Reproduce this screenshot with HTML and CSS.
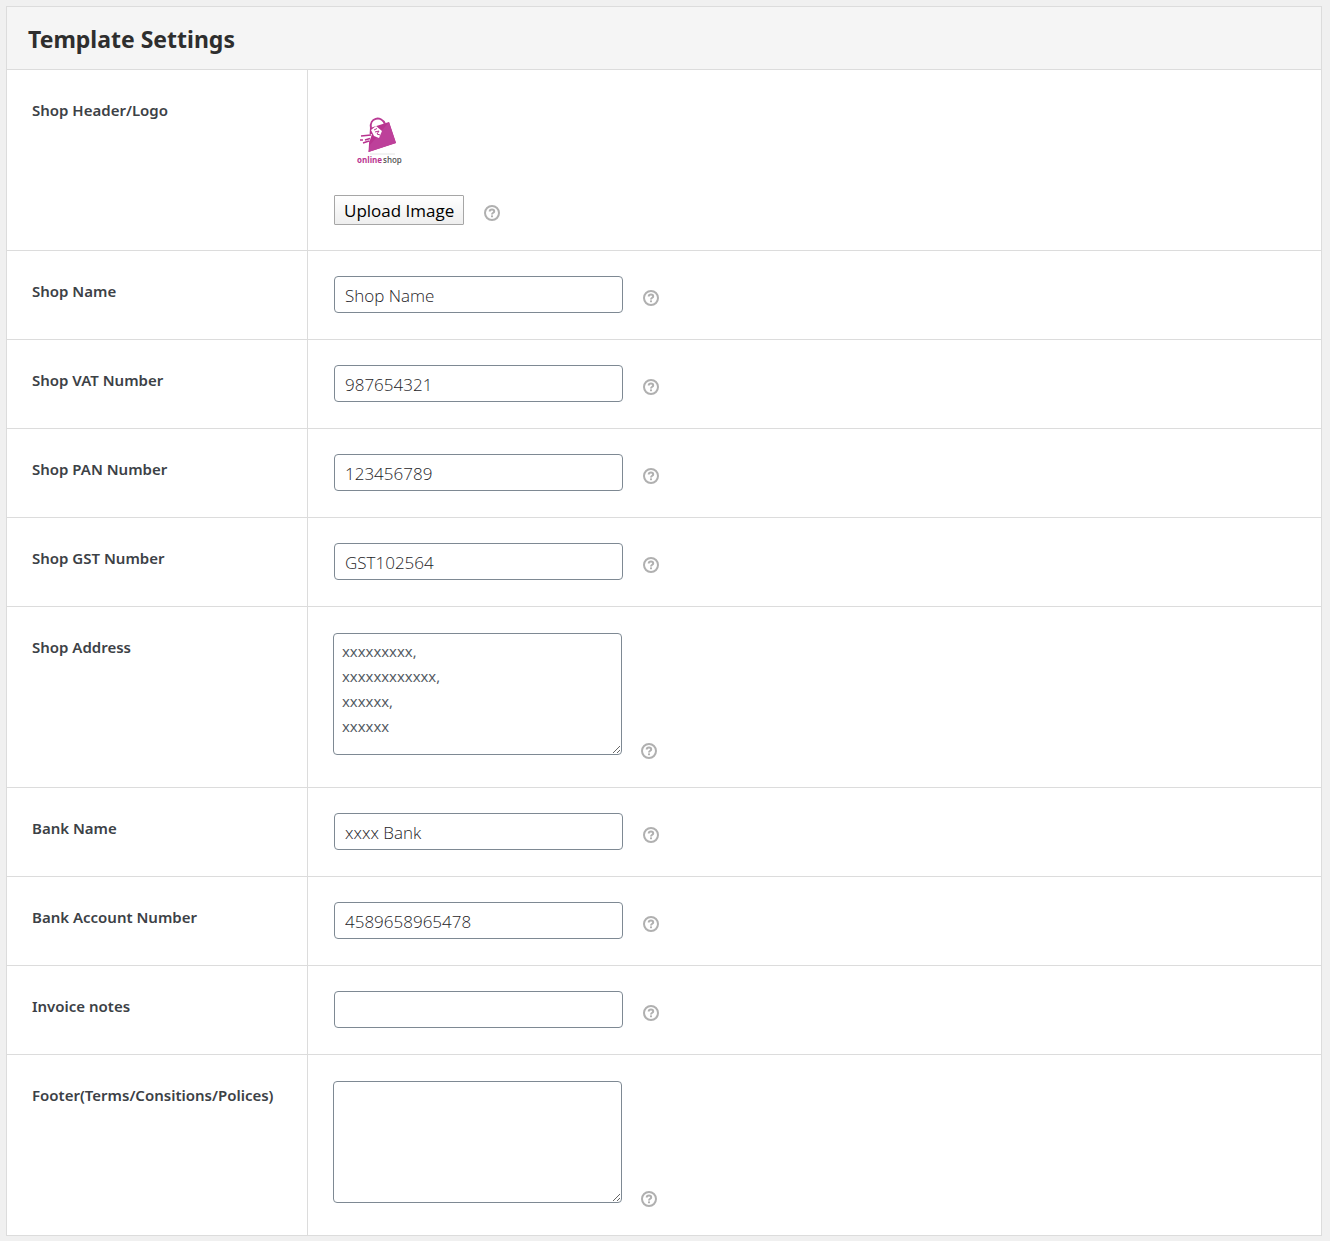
FILE: index.html
```html
<!doctype html>
<html lang="en">
  <head>
    <meta charset="UTF-8" />
    <meta name="viewport" content="width=device-width, initial-scale=1" />
    <title>Template Settings</title>
    <link rel="stylesheet" href="styles.css">
  </head>

  <body>
    <!-- Help icon, shared by all rows -->
    <svg class="sprite" aria-hidden="true">
      <symbol id="help-icon" viewBox="0 0 16 16">
        <circle cx="8" cy="8" r="7" fill="none" stroke="#b0b0b0" stroke-width="2" />
        <path d="M5.7 6.6C5.7 5.1 6.7 4.6 8 4.6s2.2.7 2.2 1.8C10.2 7.8 8 7.7 8 9.4" fill="none" stroke="#b0b0b0" stroke-width="2" />
        <rect x="7" y="10.4" width="2" height="1.8" fill="#b0b0b0" />
      </symbol>
    </svg>

    <form class="settings">
      <h2 class="title">Template Settings</h2>

      <!-- Logo -->
      <div class="row">
        <label class="name" for="upload">Shop Header/Logo</label>
        <div class="field logo-field">
          <svg class="logo" viewBox="0 0 90 90" role="img" aria-label="onlineshop">
            <path d="M37 38L56 32L63 53L35.500 62Z" fill="#b93490" />
            <path d="M56 32L63 53L35.500 62L37 55Z" fill="#bd409a" />
            <path d="M38 38C36 28 48 25 52 34" fill="none" stroke="#b93a94" stroke-width="2" />
            <path d="M38 40L43 36L49 41L46 48L41 46Z" fill="#fff" />
            <path d="M41 40L44 38.500M42 42L46 41L44 44L47 45" fill="none" stroke="#b93490" stroke-width="1" />
            <path d="M31 45L39 44L37 50L34 53L31 51Z" fill="#fff" />
            <path d="M28 46L38 45M27 50H30M32 50L37 48.500M30 53L36 51" stroke="#b93490" stroke-width="1.5" />
            <path d="M37 64H62" stroke="#e4e4e4" stroke-width="1" />
            <text x="24" y="73" class="logo-online">online</text>
            <text x="50" y="73" class="logo-shop">shop</text>
          </svg>
          <div class="control">
            <button type="button" id="upload">Upload Image</button>
            <svg class="help"><use href="#help-icon" /></svg>
          </div>
        </div>
      </div>

      <!-- Shop details -->
      <div class="row">
        <label class="name" for="shop_name">Shop Name</label>
        <div class="field control">
          <input type="text" id="shop_name" name="shop_name" value="Shop Name" />
          <svg class="help"><use href="#help-icon" /></svg>
        </div>
      </div>
      <div class="row">
        <label class="name" for="shop_vat">Shop VAT Number</label>
        <div class="field control">
          <input type="text" id="shop_vat" name="shop_vat" value="987654321" />
          <svg class="help"><use href="#help-icon" /></svg>
        </div>
      </div>
      <div class="row">
        <label class="name" for="shop_pan">Shop PAN Number</label>
        <div class="field control">
          <input type="text" id="shop_pan" name="shop_pan" value="123456789" />
          <svg class="help"><use href="#help-icon" /></svg>
        </div>
      </div>
      <div class="row">
        <label class="name" for="shop_gst">Shop GST Number</label>
        <div class="field control">
          <input type="text" id="shop_gst" name="shop_gst" value="GST102564" />
          <svg class="help"><use href="#help-icon" /></svg>
        </div>
      </div>
      <div class="row">
        <label class="name" for="shop_address">Shop Address</label>
        <div class="field control control-area">
          <textarea id="shop_address" name="shop_address">xxxxxxxxx,
xxxxxxxxxxxx,
xxxxxx,
xxxxxx</textarea>
          <svg class="help"><use href="#help-icon" /></svg>
        </div>
      </div>

      <!-- Bank details -->
      <div class="row">
        <label class="name" for="bank_name">Bank Name</label>
        <div class="field control">
          <input type="text" id="bank_name" name="bank_name" value="xxxx Bank" />
          <svg class="help"><use href="#help-icon" /></svg>
        </div>
      </div>
      <div class="row">
        <label class="name" for="bank_account">Bank Account Number</label>
        <div class="field control">
          <input type="text" id="bank_account" name="bank_account" value="4589658965478" />
          <svg class="help"><use href="#help-icon" /></svg>
        </div>
      </div>

      <!-- Notes and footer -->
      <div class="row">
        <label class="name" for="invoice_notes">Invoice notes</label>
        <div class="field control">
          <input type="text" id="invoice_notes" name="invoice_notes" />
          <svg class="help"><use href="#help-icon" /></svg>
        </div>
      </div>
      <div class="row">
        <label class="name" for="footer">Footer(Terms/Consitions/Polices)</label>
        <div class="field control control-area">
          <textarea id="footer" name="footer"></textarea>
          <svg class="help"><use href="#help-icon" /></svg>
        </div>
      </div>
    </form>
  </body>
</html>
```
FILE: styles.css
```css
* {
  box-sizing: border-box;
}

body {
  margin: 0;
  padding: 6px 8px 5px 6px;
  background-color: #f0f0f0;
  color: #3c4146;
  font-family: "Segoe UI", "Noto Sans", sans-serif;
}

.sprite {
  display: none;
}

.settings {
  border: 1px solid #dcdcdc;
  background-color: #fff;
}

.title {
  margin: 0;
  padding: 15px 21px 13px;
  background-color: #f5f5f5;
  color: #2e2e2e;
  font-size: 23px;
  font-weight: 700;
  line-height: 34px;
}

.row {
  display: grid;
  grid-template-columns: 301px 1fr;
  border-top: 1px solid #dcdcdc;
}

.name {
  padding: 30px 25px;
  border-right: 1px solid #dcdcdc;
  font-size: 15px;
  font-weight: 600;
  line-height: 20px;
}

.field {
  padding: 24px 25px;
}

.control {
  display: flex;
  align-items: center;
  gap: 19px;
}

.logo-field {
  padding-top: 20px;
}

.logo {
  display: block;
  width: 90px;
  height: 90px;
  margin-bottom: 14px;
}

.logo text {
  font-family: "Open Sans", sans-serif;
  font-size: 8px;
}

.logo-online {
  fill: #b93490;
  font-weight: 700;
}

.logo-shop {
  fill: #555;
  font-weight: 600;
}

input {
  width: 289px;
  height: 37px;
  margin: 1px 1px 2px;
  padding: 2px 10px 0;
  border: 1px solid #7e8993;
  border-radius: 4px;
  background-color: #fff;
  color: #1e2327;
  font: 300 17px "Segoe UI", "Open Sans", sans-serif;
}

textarea {
  width: 289px;
  height: 122px;
  margin: 2px 0 8px;
  padding: 5px 8px;
  border: 1px solid #7e8993;
  border-radius: 4px;
  background-color: #fff;
  color: #50575e;
  font: 15px/25px "Segoe UI", "Open Sans", sans-serif;
  resize: vertical;
}

button {
  height: 30px;
  margin: 1px;
  padding: 0 9px;
  border: 1px solid #a6a6a6;
  border-radius: 1px;
  background: linear-gradient(#fff, #eee);
  color: #000;
  font: 17px "Segoe UI", "Open Sans", sans-serif;
  cursor: pointer;
}

.help {
  width: 16px;
  height: 16px;
  margin-top: 6px;
}

.control-area .help {
  align-self: flex-end;
  margin-bottom: 4px;
}
```
